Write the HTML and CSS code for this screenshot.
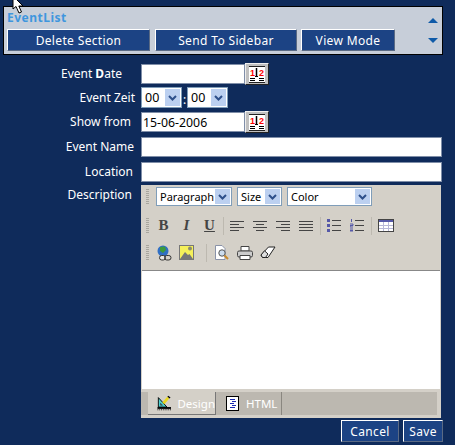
FILE: index.html
```html
<!DOCTYPE html>
<html lang="en">
<head>
    <meta charset="UTF-8">
    <meta name="viewport" content="width=device-width, initial-scale=1.0">
    <title>EventList</title>
    <link rel="stylesheet" href="styles.css">
</head>
<body>
    <svg class="pointer" width="14" height="16" viewBox="0 0 14 16"><path d="M1 -4 L1 9 L4 6.5 L7 13 L9.5 12 L6.8 6 L11 6 Z" fill="#fff" stroke="#000"/></svg>

    <div class="panel">
        <div class="panel-main">
            <div class="panel-title">EventList</div>
            <div class="panel-buttons">
                <button class="btn btn-delete">Delete Section</button>
                <button class="btn btn-send">Send To Sidebar</button>
                <button class="btn btn-view">View Mode</button>
            </div>
        </div>
        <div class="panel-arrows">
            <svg width="10" height="5" viewBox="0 0 10 5"><path d="M5 0 L10 5 L0 5 Z" fill="#0f5aa8"/></svg>
            <svg width="10" height="5" viewBox="0 0 10 5"><path d="M0 0 L10 0 L5 5 Z" fill="#0f5aa8"/></svg>
        </div>
    </div>

    <div class="form">
        <label class="row-date">Event <b>D</b>ate</label>
        <div class="field row-date">
            <input class="input input-date" type="text">
            <button class="cal">
                <svg width="16" height="17" viewBox="0 0 16 17"><use href="#cal-icon"/></svg>
            </button>
        </div>

        <label class="row-zeit">Event Zeit</label>
        <div class="field row-zeit">
            <span class="select select-time"><span class="select-text">00</span><span class="select-arrow"><svg width="9" height="6" viewBox="0 0 9 6"><path d="M1 1 L4.5 4.5 L8 1" fill="none" stroke="#2d4f8a" stroke-width="2"/></svg></span></span>
            <span class="colon">:</span>
            <span class="select select-time"><span class="select-text">00</span><span class="select-arrow"><svg width="9" height="6" viewBox="0 0 9 6"><path d="M1 1 L4.5 4.5 L8 1" fill="none" stroke="#2d4f8a" stroke-width="2"/></svg></span></span>
        </div>

        <label class="row-show">Show from</label>
        <div class="field row-show">
            <input class="input input-date" type="text" value="15-06-2006">
            <button class="cal">
                <svg width="16" height="17" viewBox="0 0 16 17">
                    <g id="cal-icon">
                        <rect width="16" height="17" fill="#fff"/>
                        <path d="M0 0.5H16M0 16.5H16" stroke="#222"/>
                        <text x="1" y="9.5" class="cal-num">1</text>
                        <text x="10" y="9.5" class="cal-num">2</text>
                        <path d="M7.5 2V11" stroke="#000" stroke-width="1.5"/>
                        <path d="M1 12.5H6M1 14.5H6M10 12.5H15M10 14.5H15M6 10.5H9" stroke="#000" fill="none"/>
                    </g>
                </svg>
            </button>
        </div>

        <label class="row-name">Event Name</label>
        <div class="field row-name"><input class="input input-wide" type="text"></div>

        <label class="row-location">Location</label>
        <div class="field row-location"><input class="input input-wide" type="text"></div>

        <label class="row-desc">Description</label>
        <div class="editor">
            <div class="toolbar">
                <div class="tool-row tool-row-selects">
                    <span class="grip"></span>
                    <span class="select select-para"><span class="select-text">Paragraph</span><span class="select-arrow"><svg width="9" height="6" viewBox="0 0 9 6"><path d="M1 1 L4.5 4.5 L8 1" fill="none" stroke="#2d4f8a" stroke-width="2"/></svg></span></span>
                    <span class="select select-size"><span class="select-text">Size</span><span class="select-arrow"><svg width="9" height="6" viewBox="0 0 9 6"><path d="M1 1 L4.5 4.5 L8 1" fill="none" stroke="#2d4f8a" stroke-width="2"/></svg></span></span>
                    <span class="select select-color"><span class="select-text">Color</span><span class="select-arrow"><svg width="9" height="6" viewBox="0 0 9 6"><path d="M1 1 L4.5 4.5 L8 1" fill="none" stroke="#2d4f8a" stroke-width="2"/></svg></span></span>
                </div>
                <div class="tool-row">
                    <span class="grip"></span>
                    <span class="tool tool-text tool-b">B</span>
                    <span class="tool tool-text tool-i">I</span>
                    <span class="tool tool-text tool-u">U</span>
                    <span class="sep"></span>
                    <span class="tool"><svg width="15" height="12" viewBox="0 0 15 12"><path d="M0 1.5H14M0 4.5H9M0 7.5H14M0 10.5H9" stroke="#444"/></svg></span>
                    <span class="tool"><svg width="15" height="12" viewBox="0 0 15 12"><path d="M0 1.5H14M3 4.5H11M0 7.5H14M3 10.5H11" stroke="#444"/></svg></span>
                    <span class="tool"><svg width="15" height="12" viewBox="0 0 15 12"><path d="M0 1.5H14M5 4.5H14M0 7.5H14M5 10.5H14" stroke="#444"/></svg></span>
                    <span class="tool"><svg width="15" height="12" viewBox="0 0 15 12"><path d="M0 1.5H14M0 4.5H14M0 7.5H14M0 10.5H14" stroke="#444"/></svg></span>
                    <span class="sep"></span>
                    <span class="tool"><svg width="15" height="13" viewBox="0 0 15 13"><path d="M0 0H3V3H0ZM0 5H3V8H0ZM0 10H3V13H0Z" fill="#5558a8"/><path d="M5 1.5H14M5 6.5H14M5 11.5H14" stroke="#444"/></svg></span>
                    <span class="tool"><svg width="15" height="13" viewBox="0 0 15 13"><path d="M1.5 0V3M0 5H3V6.5H0V8H3M0 10H3M0 11.5H3M0 13H3" stroke="#5558a8" fill="none"/><path d="M5 1.5H14M5 6.5H14M5 11.5H14" stroke="#444"/></svg></span>
                    <span class="sep"></span>
                    <span class="tool"><svg width="16" height="13" viewBox="0 0 16 13"><rect x="0.5" y="0.5" width="15" height="12" fill="#fff" stroke="#444"/><rect x="1" y="1" width="14" height="2" fill="#5558a8"/><path d="M5.5 3V12M10.5 3V12M1 6.5H15M1 9.5H15" stroke="#b8b8d8"/></svg></span>
                </div>
                <div class="tool-row">
                    <span class="grip"></span>
                    <span class="tool"><svg width="16" height="16" viewBox="0 0 16 16"><circle cx="7" cy="6" r="5.5" fill="#2f6fc4"/><path d="M4 2 L9 1.5 L10 5 L7 8 L4 6 Z" fill="#3c9a3c"/><rect x="3.5" y="10.5" width="6" height="4.5" rx="2.2" fill="#e8e8e8" stroke="#333"/><rect x="8.5" y="10.5" width="6.5" height="4.5" rx="2.2" fill="none" stroke="#333"/></svg></span>
                    <span class="tool"><svg width="15" height="15" viewBox="0 0 15 15"><rect x="0.5" y="0.5" width="14" height="14" fill="#f5f05a" stroke="#777"/><path d="M1 14 L6 7 L9 10 L10.5 9 L14 14 Z" fill="#777"/><circle cx="11" cy="3.5" r="2" fill="#8a8a70"/></svg></span>
                    <span class="sep sep-wide"></span>
                    <span class="tool"><svg width="16" height="15" viewBox="0 0 16 15"><path d="M1.5 0.5H8L11 3.5V14.5H1.5Z" fill="#fff" stroke="#8a93a8"/><circle cx="8" cy="8" r="3.2" fill="#cde" stroke="#555"/><path d="M10.5 10.5 L14 14" stroke="#c98a2a" stroke-width="2"/></svg></span>
                    <span class="tool"><svg width="16" height="14" viewBox="0 0 16 14"><path d="M4 0.5H12V5H4Z" fill="#fff" stroke="#444"/><rect x="0.5" y="5" width="15" height="6" rx="1.5" fill="#ccc" stroke="#444"/><path d="M3 9.5H13V13.5H3Z" fill="#fff" stroke="#444"/></svg></span>
                    <span class="tool"><svg width="16" height="13" viewBox="0 0 16 13"><path d="M1 9 L8.5 1 H15 L8 11.5 H2.5 Z" fill="#fff" stroke="#222"/><path d="M1 9 L4.5 4.8 L8 8 L5.5 11.5 H2.5 Z" fill="#ddd" stroke="#222"/></svg></span>
                </div>
            </div>
            <div class="edit-area"></div>
            <div class="tabs">
                <span class="tab tab-active">
                    <svg width="16" height="16" viewBox="0 0 16 16"><path d="M1.5 2 V12.5 H11 Z" fill="#4fd0d0" stroke="#000"/><path d="M4 8.5V10.5H6Z" fill="#d4d0c8" stroke="#000" stroke-width="0.6"/><path d="M7 8.5 L12.5 2" stroke="#e8d820" stroke-width="3"/><path d="M12 0.5 L14.5 2.5" stroke="#000" stroke-width="1.5"/><path d="M0.5 13.5 H15.5" stroke="#000" stroke-width="2"/><path d="M0.5 15.5 H15.5" stroke="#000" stroke-dasharray="1 1"/></svg>
                    Design
                </span>
                <span class="tab tab-html">
                    <svg width="13" height="15" viewBox="0 0 13 15"><rect x="0.5" y="0.5" width="12" height="14" fill="#fff" stroke="#000"/><path d="M4 3.5H9M6 5.5H10M4 7.5H8M6 9.5H10M4 11.5H9" stroke="#1a2ab0"/></svg>
                    HTML
                </span>
            </div>
        </div>
    </div>

    <div class="actions">
        <button class="btn btn-cancel">Cancel</button>
        <button class="btn btn-save">Save</button>
    </div>
</body>
</html>
```

FILE: styles.css
```css
body {
    margin: 0;
    height: 445px;
    overflow: hidden;
    padding: 6px 0 0 3px;
    box-sizing: border-box;
    background-color: #0f2b5b;
    color: #fff;
    font-family: 'Noto Sans', sans-serif;
    font-size: 12px;
    position: relative;
}

.pointer {
    position: absolute;
    left: 12px;
    top: 0;
}

.panel {
    width: 440px;
    height: 49px;
    box-sizing: border-box;
    background-color: #c7ced9;
    border: 1px solid #000;
    display: flex;
    justify-content: space-between;
}

.panel-main {
    padding: 4px 0 0 3px;
}

.panel-title {
    color: #3f96de;
    font-size: 12px;
    font-weight: bold;
    letter-spacing: 0.5px;
    line-height: 14px;
    margin-bottom: 4px;
}

.panel-buttons {
    display: flex;
    gap: 5px;
}

.btn {
    background-color: #1c4384;
    color: #fff;
    border: 1px solid;
    border-color: #fff #5a6a84 #5a6a84 #fff;
    font-family: 'Noto Sans', sans-serif;
    font-size: 12px;
    letter-spacing: 0.35px;
    padding: 0;
    height: 22px;
}

.btn-delete { width: 143px; }
.btn-send { width: 142px; }
.btn-view { width: 94px; margin-left: -1px; }

.panel-arrows {
    display: flex;
    flex-direction: column;
    gap: 15px;
    padding: 11px 4px 0 0;
}

.panel-arrows svg {
    display: block;
}

.form {
    display: grid;
    grid-template-columns: 132px 301px;
    column-gap: 6px;
    margin-top: 9px;
}

.form label {
    text-align: right;
    line-height: 20px;
    font-size: 12px;
}

.form label b {
    font-weight: bold;
}

label.row-date { padding-right: 13px; }
label.row-zeit { line-height: 22px; }
label.row-show { padding-right: 4px; }
label.row-name { padding-right: 1px; }
label.row-location { padding-right: 2px; }
label.row-desc { padding-right: 3px; }

.field {
    display: flex;
    align-items: flex-start;
}

.row-date { height: 23px; }
.row-zeit { height: 25px; }
.row-show { height: 25px; }
.row-name { height: 25px; }
.row-location { height: 23px; }

.input {
    box-sizing: border-box;
    height: 20px;
    border: 1px solid #7f8ea8;
    background-color: #fff;
    padding: 0 1px;
    font-family: 'Noto Sans', sans-serif;
    font-size: 12.3px;
    color: #000;
}

.input-date { width: 104px; }
.input-wide { width: 301px; }

.cal {
    box-sizing: border-box;
    width: 24px;
    height: 22px;
    margin-top: -1px;
    padding: 0;
    background-color: #c0c0c0;
    border: 1px solid;
    border-color: #eee #222 #222 #eee;
    display: flex;
    align-items: center;
    justify-content: center;
}

.cal-num {
    fill: #f00;
    font-family: 'Liberation Sans', sans-serif;
    font-size: 9px;
    font-weight: bold;
}

.select {
    box-sizing: border-box;
    height: 19px;
    display: inline-flex;
    align-items: center;
    justify-content: space-between;
    background-color: #fff;
    border: 1px solid #7f9db9;
    color: #000;
    font-size: 11px;
    padding: 0 1px 0 3px;
}

.select-arrow {
    width: 15px;
    height: 15px;
    background-color: #bcd0f0;
    display: flex;
    align-items: center;
    justify-content: center;
}

.select-time {
    width: 41px;
    height: 21px;
    font-size: 12.5px;
}

.select-time .select-arrow { height: 17px; }

.colon {
    width: 5px;
    line-height: 26px;
    text-align: center;
}

.editor {
    width: 300px;
    background-color: #d4d0c8;
}

.toolbar {
    height: 85px;
    padding-top: 2px;
    box-sizing: border-box;
}

.tool-row {
    height: 27px;
    display: flex;
    align-items: center;
    padding-left: 5px;
}

.tool-row-selects {
    height: 19px;
    margin-bottom: 6px;
    gap: 5px;
}

.grip {
    width: 3px;
    height: 16px;
    margin-right: 3px;
    background: repeating-linear-gradient(to bottom, #a8a69e 0, #a8a69e 1px, transparent 1px, transparent 2px);
}

.tool-row-selects .grip {
    margin-right: 2px;
}

.select-para { width: 76px; }
.select-size { width: 45px; }
.select-color { width: 85px; }

.tool {
    width: 23px;
    display: flex;
    align-items: center;
    justify-content: center;
}

.tool-text {
    color: #444;
    font-size: 15px;
    font-weight: bold;
    font-family: 'Liberation Serif', serif;
}

.tool-i { font-style: italic; }
.tool-u { text-decoration: underline; }

.sep {
    width: 1px;
    height: 18px;
    margin: 0 2px;
    background-color: #bdb9b0;
}

.sep-wide {
    margin: 0 3px 0 8px;
}

.edit-area {
    width: 298px;
    height: 119px;
    margin-left: 1px;
    background-color: #fff;
    border-top: 1px solid #888;
    box-sizing: border-box;
}

.tabs {
    height: 29px;
    box-sizing: border-box;
    padding: 3px 3px 3px 1px;
    background-color: #d4d0c8;
    background-image: linear-gradient(#bcb8b0, #bcb8b0);
    background-size: 296px 23px;
    background-position: 0 3px;
    background-repeat: no-repeat;
    display: flex;
}

.tab {
    display: flex;
    align-items: center;
    gap: 7px;
    color: #fff;
    font-size: 11.5px;
    border-right: 1px solid #8a8780;
}

.tab-active {
    width: 68px;
    box-sizing: border-box;
    margin-left: 6px;
    padding-left: 9px;
    gap: 6px;
    background-color: #d4d0c8;
    border-right: 1px solid #777;
    border-bottom: 1px solid #777;
}

.tab-html {
    width: 66px;
    box-sizing: border-box;
    padding-left: 10px;
}

.actions {
    display: flex;
    justify-content: flex-end;
    gap: 4px;
    width: 440px;
    margin-top: 2px;
}

.btn-cancel { width: 58px; }
.btn-save { width: 40px; }
```
